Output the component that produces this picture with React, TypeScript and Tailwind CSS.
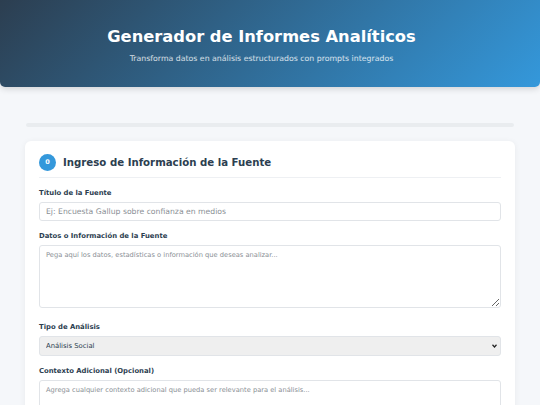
import React from "react";

const labelCls = "block mb-[5px] text-[6.85px] leading-[8px] font-bold text-[#2c3e50]";
const areaCls =
  "block w-full px-[6px] py-[5px] border border-[#e1e4e8] rounded-[3px] text-[6.7px] leading-[9px] placeholder:text-[#8a8f95] outline-none resize-y";

export default function App() {
  return (
    <div className="min-h-screen bg-[#f5f7fa] text-[#2c3e50]" style={{ fontFamily: '"DejaVu Sans", Verdana, sans-serif' }}>
      <header className="h-[87px] rounded-b-[5px] bg-[linear-gradient(135deg,#2c3e50_0%,#3498db_100%)] shadow-[0_2px_6px_rgba(0,0,0,0.15)] flex flex-col items-center pt-[24px] pr-[17px]">
        <h1 className="text-[16.3px] leading-[26px] font-bold text-white">Generador de Informes Analíticos</h1>
        <p className="mt-[4px] text-[7.8px] leading-[10px] text-white/80">Transforma datos en análisis estructurados con prompts integrados</p>
      </header>
      <main className="px-[25px] pt-[36px]">
        <div className="h-[4px] mx-[1px] rounded-full bg-[#e9ecef]"></div>
        <section className="mt-[14px] bg-white rounded-[6px] shadow-[0_1px_6px_rgba(0,0,0,0.06)] px-[14px] pt-[13px] pb-[20px]">
          <div className="flex items-center gap-[7px] pb-[6px] border-b border-[#eef0f3]">
            <div className="w-[17px] h-[17px] rounded-full bg-[#3498db] text-white text-[6.5px] font-bold flex items-center justify-center">0</div>
            <h2 className="text-[10.2px] leading-[17px] font-bold text-[#2c3e50]">Ingreso de Información de la Fuente</h2>
          </div>
          <label className={`${labelCls} mt-[11px]`}>Título de la Fuente</label>
          <input
            type="text"
            placeholder="Ej: Encuesta Gallup sobre confianza en medios"
            className="block w-full h-[19px] px-[6px] border border-[#e1e4e8] rounded-[3px] text-[7.7px] placeholder:text-[#8a8f95] outline-none"
          />
          <label className={`${labelCls} mt-[11px]`}>Datos o Información de la Fuente</label>
          <textarea
            placeholder="Pega aquí los datos, estadísticas o información que deseas analizar..."
            className={`${areaCls} h-[63px]`}
          />
          <label className={`${labelCls} mt-[15px]`}>Tipo de Análisis</label>
          <div className="relative">
            <select className="block w-full h-[20px] px-[6px] border border-[#e1e4e8] rounded-[3px] bg-[#efefef] text-[6.85px] text-[#2c3e50] outline-none appearance-none">
              <option>Análisis Social</option>
            </select>
            <svg className="absolute right-[4px] top-[8px] w-[5px] h-[4px] pointer-events-none" viewBox="0 0 10 8">
              <polyline points="1,1.5 5,6 9,1.5" fill="none" stroke="#222" strokeWidth="2.4" />
            </svg>
          </div>
          <label className={`${labelCls} mt-[11px]`}>Contexto Adicional (Opcional)</label>
          <textarea
            placeholder="Agrega cualquier contexto adicional que pueda ser relevante para el análisis..."
            className={`${areaCls} h-[63px]`}
          />
        </section>
      </main>
    </div>
  );
}
